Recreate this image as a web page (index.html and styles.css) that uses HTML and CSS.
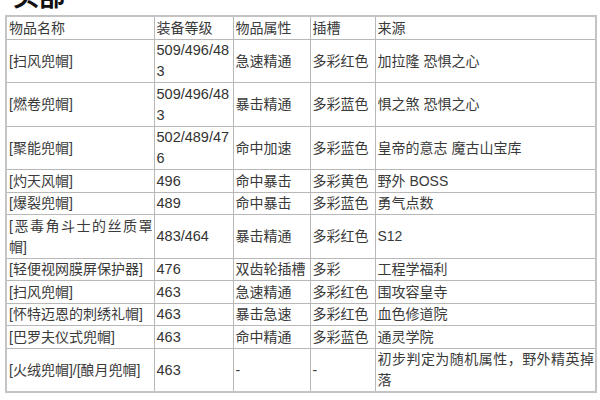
FILE: index.html
```html
<!DOCTYPE html>
<html lang="zh-CN">
<head>
<meta charset="utf-8">
<title>头部</title>
<link rel="stylesheet" href="styles.css">
</head>
<body>
<h2 class="title">头部</h2>
<table class="gear">
  <colgroup>
    <col class="c-name"><col class="c-lvl"><col class="c-attr"><col class="c-slot"><col class="c-src">
  </colgroup>
  <tr><td>物品名称</td><td>装备等级</td><td>物品属性</td><td>插槽</td><td>来源</td></tr>
  <tr><td>[扫风兜帽]</td><td class="num">509/496/483</td><td>急速精通</td><td>多彩红色</td><td>加拉隆 恐惧之心</td></tr>
  <tr><td>[燃卷兜帽]</td><td class="num">509/496/483</td><td>暴击精通</td><td>多彩蓝色</td><td>惧之煞 恐惧之心</td></tr>
  <tr><td>[聚能兜帽]</td><td class="num">502/489/476</td><td>命中加速</td><td>多彩蓝色</td><td>皇帝的意志 魔古山宝库</td></tr>
  <tr><td>[灼天风帽]</td><td class="num">496</td><td>命中暴击</td><td>多彩黄色</td><td>野外 BOSS</td></tr>
  <tr><td>[爆裂兜帽]</td><td class="num">489</td><td>命中暴击</td><td>多彩蓝色</td><td>勇气点数</td></tr>
  <tr><td>[恶毒角斗士的丝质罩帽]</td><td class="num">483/464</td><td>暴击精通</td><td>多彩红色</td><td>S12</td></tr>
  <tr><td>[轻便视网膜屏保护器]</td><td class="num">476</td><td>双齿轮插槽</td><td>多彩</td><td>工程学福利</td></tr>
  <tr><td>[扫风兜帽]</td><td class="num">463</td><td>急速精通</td><td>多彩红色</td><td>围攻容皇寺</td></tr>
  <tr><td>[怀特迈恩的刺绣礼帽]</td><td class="num">463</td><td>暴击急速</td><td>多彩红色</td><td>血色修道院</td></tr>
  <tr><td>[巴罗夫仪式兜帽]</td><td class="num">463</td><td>命中精通</td><td>多彩蓝色</td><td>通灵学院</td></tr>
  <tr><td>[火绒兜帽]/[酿月兜帽]</td><td class="num">463</td><td>-</td><td>-</td><td>初步判定为随机属性，野外精英掉落</td></tr>
</table>
</body>
</html>
```
FILE: styles.css
```css
html, body {
  margin: 0;
  padding: 0;
  background: #ffffff;
}
body {
  width: 600px;
  height: 400px;
  overflow: hidden;
  font-family: "Liberation Sans", "Noto Sans CJK SC", sans-serif;
  color: #3a3a3a;
}
.title {
  margin: -18px 0 0 13px;
  font-size: 26px;
  line-height: 26px;
  font-weight: bold;
  color: #111;
  font-family: "Noto Sans CJK SC", sans-serif;
}
.gear {
  margin: 7px 0 0 5px;
  width: 590px;
  table-layout: fixed;
  border-collapse: collapse;
  border: 2px solid #c4c4c4;
  font-size: 14px;
}
.c-name { width: 148px; }
.c-lvl { width: 79px; }
.c-attr { width: 77px; }
.c-slot { width: 65px; }
.c-src { width: 221px; }
.gear td {
  border: 1px solid #b8b8b8;
  padding: 0.5px 1px 0 2px;
  line-height: 21px;
  vertical-align: middle;
  text-align: justify;
  word-break: break-all;
}
.gear td.num {
  font-size: 14.5px;
  color: #333;
}
```
